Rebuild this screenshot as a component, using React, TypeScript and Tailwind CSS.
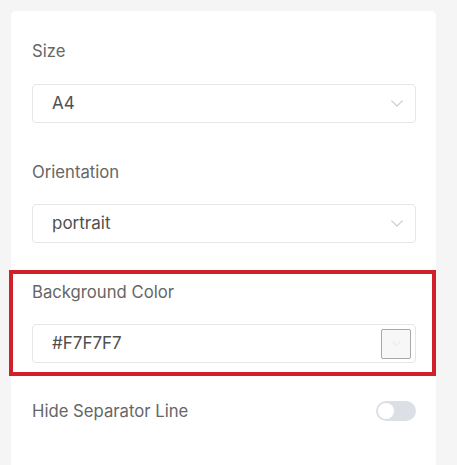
import React, { useState } from "react";

const font = { fontFamily: "Inter, 'Noto Sans', sans-serif" };

function Chevron({ className }: { className: string }) {
  return (
    <svg
      className={className}
      viewBox="0 0 14 8"
      fill="none"
      stroke="currentColor"
      strokeWidth="1.3"
      strokeLinecap="round"
      strokeLinejoin="round"
    >
      <path d="M1 1l6 6 6-6" />
    </svg>
  );
}

function SelectField({ value }: { value: string }) {
  return (
    <div className="flex h-[39px] items-center justify-between rounded-[4px] border border-[#e6e6e6] bg-white pl-[19px] pr-[11px]">
      <span className="text-[17px] leading-none text-[#505050]">{value}</span>
      <Chevron className="h-[7px] w-[14px] text-[#c9c9c9]" />
    </div>
  );
}

function Label({ children }: { children: React.ReactNode }) {
  return <div className="text-[16.7px] leading-[20px] text-[#666]">{children}</div>;
}

export default function App() {
  const [hideLine, setHideLine] = useState<boolean>(false);

  return (
    <div className="flex h-[465px] w-[457px] overflow-hidden bg-[#f5f5f5]" style={font}>
      <div className="ml-[11px] mt-[11px] flex w-[425px] flex-col rounded-t-[5px] bg-white pl-[21px] pr-[20px] pt-[30px]">
        <Label>Size</Label>
        <div className="mt-[23px]">
          <SelectField value="A4" />
        </div>

        <div className="mt-[39px]">
          <Label>Orientation</Label>
        </div>
        <div className="mt-[22px]">
          <SelectField value="portrait" />
        </div>

        {/* highlighted section */}
        <div className="-mb-[13px] -ml-[23px] -mr-[20px] mt-[27px] border-4 border-[#d0212b] pb-[9px] pl-[19px] pr-[16px] pt-[8px]">
          <Label>Background Color</Label>
          <div className="mt-[22px] flex h-[39px] items-center justify-between rounded-[4px] border border-[#e6e6e6] bg-white pl-[19px] pr-[4px]">
            <span className="text-[17px] leading-none text-[#505050]">#F7F7F7</span>
            <div className="flex h-[30px] w-[30px] items-center justify-center rounded-[2px] border border-[#a8a8a8] bg-[#f7f7f7]">
              <Chevron className="h-[5px] w-[9px] text-[#e2e2e2]" />
            </div>
          </div>
        </div>

        <div className="mt-[38px] flex items-center justify-between">
          <Label>Hide Separator Line</Label>
          <button
            type="button"
            onClick={() => setHideLine(!hideLine)}
            className={
              hideLine
                ? "flex h-[20px] w-[40px] items-center justify-end rounded-full bg-[#409eff] p-[2px]"
                : "flex h-[20px] w-[40px] items-center justify-start rounded-full bg-[#dcdfe6] p-[2px]"
            }
          >
            <span className="h-[16px] w-[16px] rounded-full bg-white" />
          </button>
        </div>
      </div>
    </div>
  );
}
